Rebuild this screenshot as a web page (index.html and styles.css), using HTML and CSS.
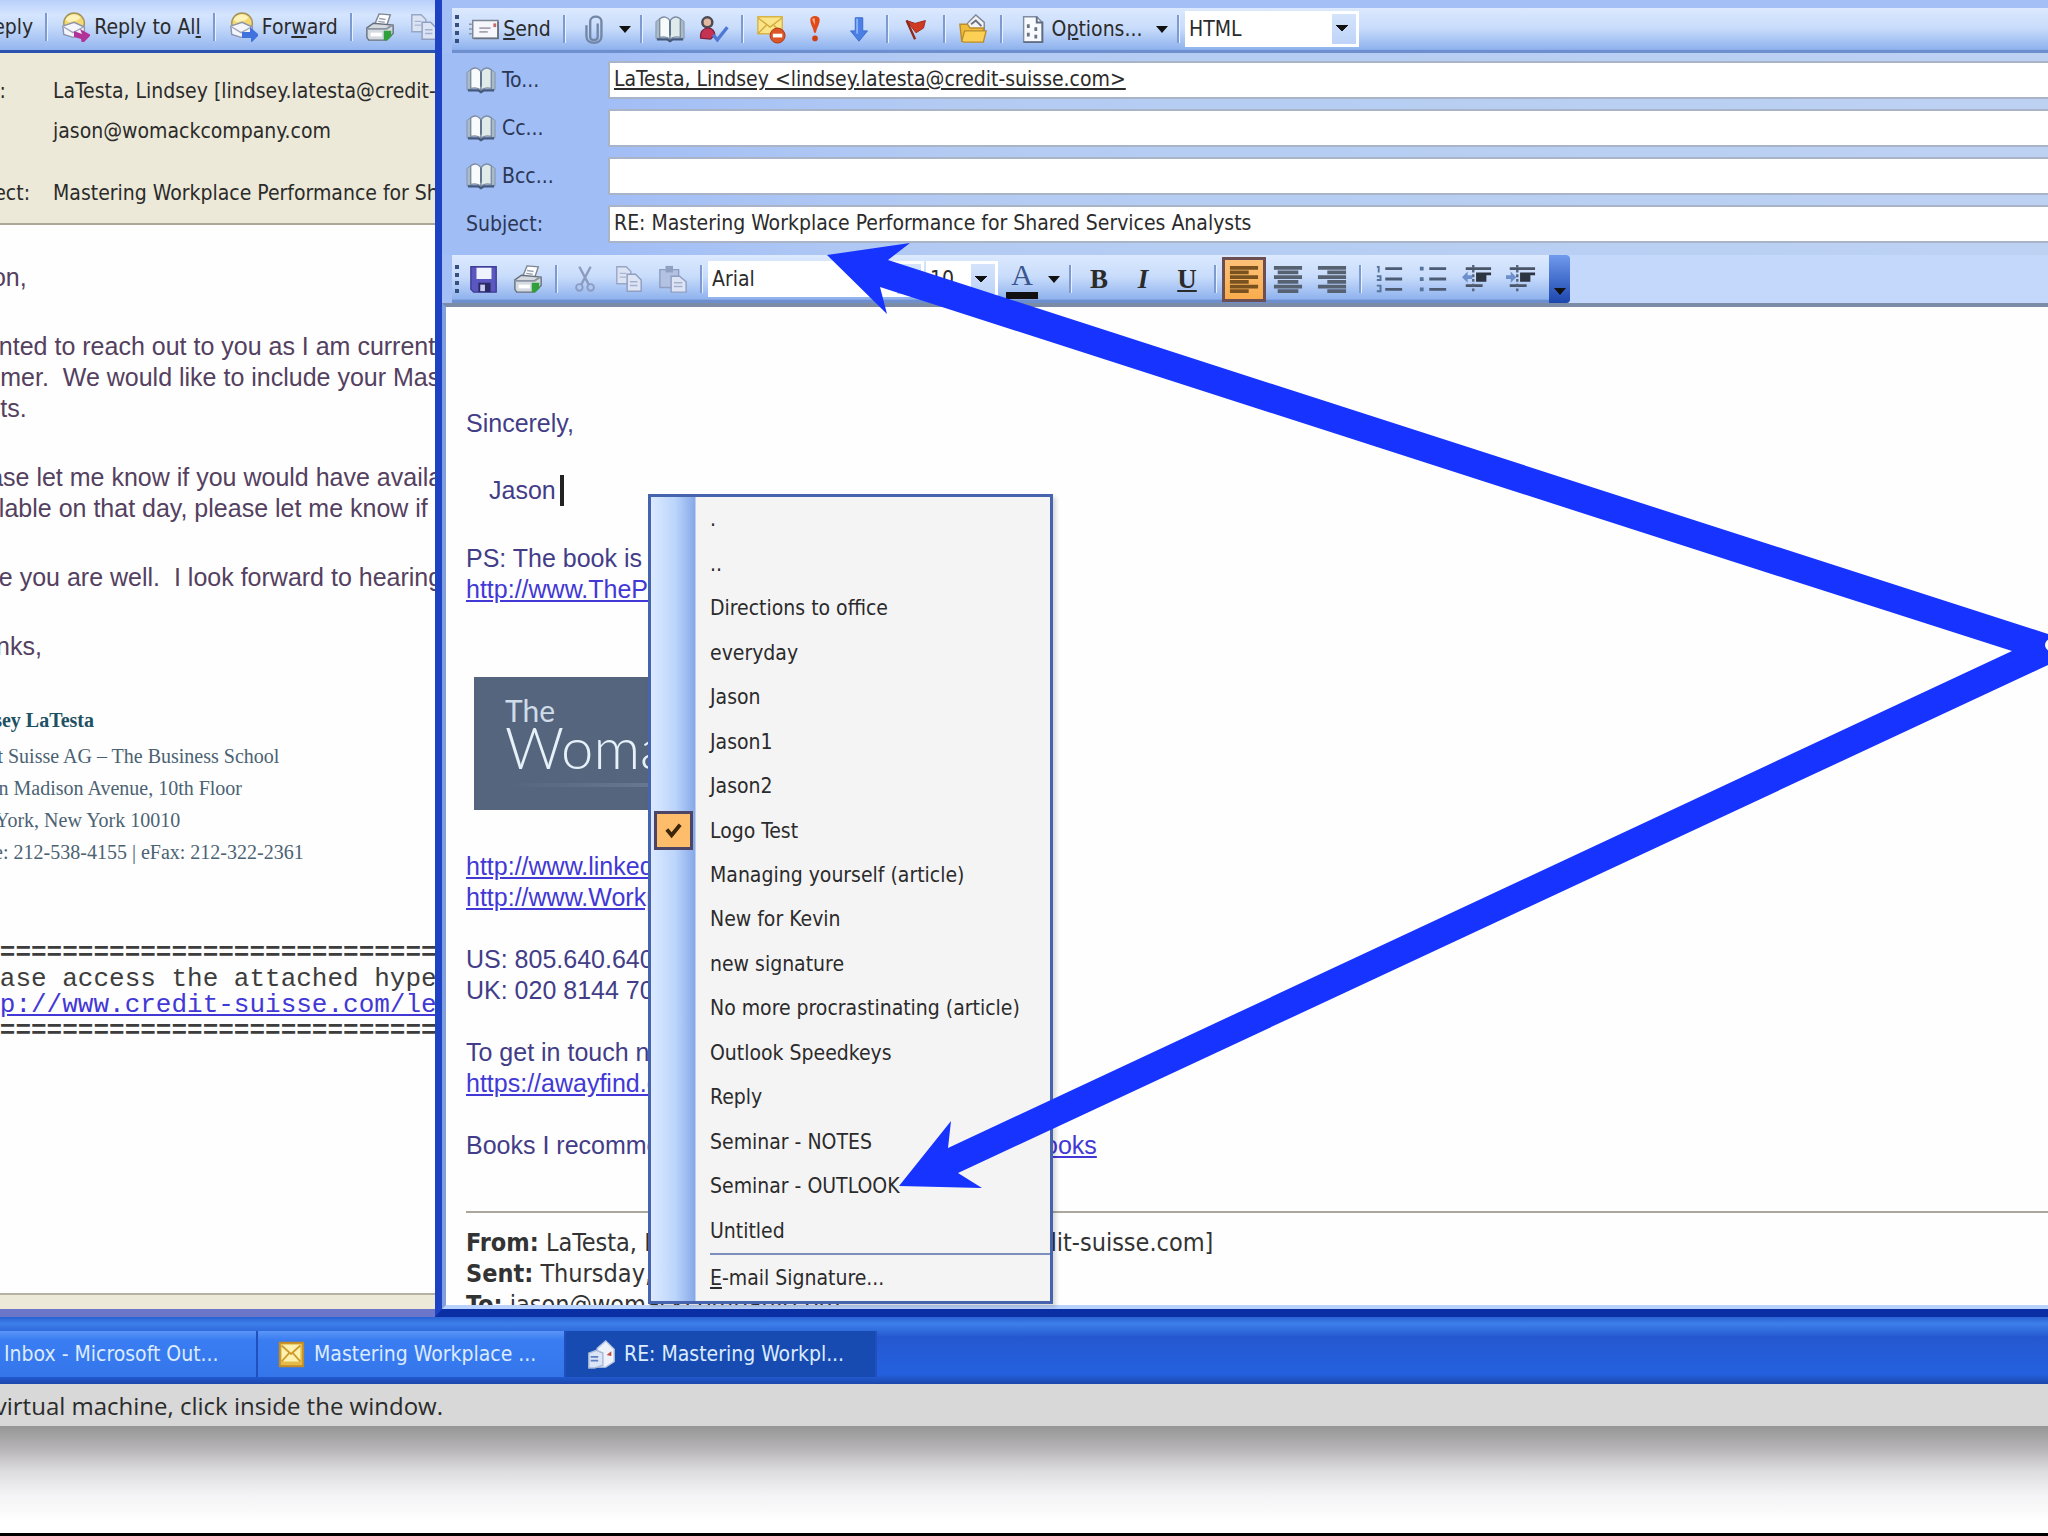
FILE: index.html
```html
<!DOCTYPE html>
<html lang="en">
<head>
    <meta charset="UTF-8">
    <meta name="viewport" content="width=device-width, initial-scale=1.0">
    <title>RE: Mastering Workplace Performance for Shared Services Analysts</title>
    <link rel="stylesheet" href="styles.css">
</head>
<body>
    <!-- shared icons -->
    <svg class="sprite" aria-hidden="true">
        <symbol id="i-head" viewBox="0 0 32 32">
            <circle cx="15" cy="12" r="11" fill="#f3d873" stroke="#a3925a" stroke-width="1.5"/>
            <path d="M6 8c3-6 12-7 16-2l-4 3-9 2z" fill="#fff3b8"/>
            <path d="M3 15l12-4 11 5v8l-12 3-10-3z" fill="#f4f6fb" stroke="#8c94ae" stroke-width="1.5"/>
            <path d="M4 16l10 6 11-6" fill="none" stroke="#9ca4bc" stroke-width="1.5"/>
        </symbol>
        <symbol id="i-printer" viewBox="0 0 32 32">
            <path d="M10 14l5-12 12 1-4 12z" fill="#fff" stroke="#7d8794" stroke-width="1.5"/>
            <path d="M15 7l7 1M14 10l7 1" stroke="#9aa4b5" stroke-width="1.5"/>
            <path d="M2 17l7-5 21 2v9l-7 7H4l-2-3z" fill="#d5dae0" stroke="#66707d" stroke-width="1.5"/>
            <path d="M3 18h20l6-4" fill="none" stroke="#8b95a2" stroke-width="2"/>
            <path d="M6 22h12v4H6z" fill="#fff"/>
            <path d="M20 20h8v6l-4 4h-4z" fill="#2fa03a"/>
        </symbol>
        <symbol id="i-copy" viewBox="0 0 32 32">
            <path d="M3 3h10l5 5v13H3z" fill="#dce4f4" stroke="#98a6c6" stroke-width="1.5"/>
            <path d="M6 10h7M6 14h7" stroke="#a9b5d1" stroke-width="1.5"/>
            <path d="M14 11h9l6 6v12H14z" fill="#dde5f5" stroke="#8f9dc0" stroke-width="1.5"/>
            <path d="M17 19h8M17 23h8" stroke="#a4b0cd" stroke-width="1.5"/>
        </symbol>
        <symbol id="i-paste" viewBox="0 0 32 32">
            <path d="M2 6h20v19H2z" fill="#b3c2e2" stroke="#8f9dc0" stroke-width="1.5"/>
            <path d="M8 2h8v7H8z" fill="#92a0c3"/>
            <path d="M14 13h9l7 6v11H14z" fill="#dde5f5" stroke="#8f9dc0" stroke-width="1.5"/>
            <path d="M17 20h9M17 24h9" stroke="#a4b0cd" stroke-width="1.5"/>
        </symbol>
        <symbol id="i-cut" viewBox="0 0 32 32">
            <path d="M10 3l10 19M22 3L12 22" stroke="#8b9bbf" stroke-width="2.5" fill="none"/>
            <circle cx="10" cy="25" r="3.5" stroke="#8b9bbf" stroke-width="2" fill="none"/>
            <circle cx="22" cy="25" r="3.5" stroke="#8b9bbf" stroke-width="2" fill="none"/>
        </symbol>
        <symbol id="i-save" viewBox="0 0 32 32">
            <path d="M2 3h27v27H5l-3-3z" fill="#5a57c0" stroke="#403d96" stroke-width="1.5"/>
            <path d="M8 4h16v12H8z" fill="#eef3ff"/>
            <path d="M10 20h13v10H10z" fill="#2b2a66"/>
            <path d="M12 22h5v7h-5z" fill="#c9cdf0"/>
        </symbol>
        <symbol id="i-book" viewBox="0 0 32 32">
            <path d="M1 8l4-3v21H1zM31 8l-4-3v21h4z" fill="#a9bac9" stroke="#8195ab"/>
            <path d="M5 5c4-3 8-2 11 2v20c-3-3-7-3-11-2z" fill="#f7fbfb" stroke="#7e8da2" stroke-width="1.5"/>
            <path d="M27 5c-4-3-8-2-11 2v20c3-3 7-3 11-2z" fill="#dfeaea" stroke="#7e8da2" stroke-width="1.5"/>
            <path d="M16 7v16" stroke="#62758f" stroke-width="2"/>
            <path d="M2 27h11l3 2 3-2h11" stroke="#46587a" stroke-width="2.5" fill="none"/>
        </symbol>
        <symbol id="i-envelope" viewBox="0 0 32 32">
            <path d="M4 7h27v19H4z" fill="#f5f7fc" stroke="#7d8492" stroke-width="1.5"/>
            <path d="M31 8v18H5" fill="none" stroke="#6b7280" stroke-width="2"/>
            <path d="M11 15h12M11 19h9" stroke="#a9a2b3" stroke-width="2"/>
            <path d="M26 10h3v4h-3z" fill="#c56a6a"/>
            <path d="M0 11h3M0 16h3M0 21h3" stroke="#8893a8" stroke-width="1.5"/>
        </symbol>
        <symbol id="i-clip" viewBox="0 0 32 32">
            <path d="M21 10v14c0 5-8 5-8 0V8c0-7 12-7 12 0v16c0 9-16 9-16 0V12" fill="none" stroke="#7187a5" stroke-width="2.5"/>
        </symbol>
        <symbol id="i-check-name" viewBox="0 0 36 32">
            <circle cx="10" cy="8" r="6" fill="#e2b9a0" stroke="#4d4a55" stroke-width="3"/>
            <path d="M2 27c-1-8 3-12 9-12 5 0 8 4 8 8l-5 5z" fill="#c63352" stroke="#7d2340" stroke-width="1.5"/>
            <path d="M17 23l5 6L34 14" fill="none" stroke="#4f78d6" stroke-width="4"/>
        </symbol>
        <symbol id="i-block" viewBox="0 0 32 32">
            <path d="M2 3h26v18H2z" fill="#fbe58a" stroke="#d8b445" stroke-width="1.5"/>
            <path d="M2 4l13 10L28 4M2 21l9-9M28 21l-9-9" fill="none" stroke="#d3ab3b" stroke-width="1.5"/>
            <circle cx="23" cy="23" r="8" fill="#dc5527" stroke="#aa3310"/>
            <path d="M18 21h10v4H18z" fill="#fff"/>
        </symbol>
        <symbol id="i-high" viewBox="0 0 32 32">
            <path d="M11 6c0-5 10-5 10 0 0 5-3 8-4 14h-2c-1-6-4-9-4-14z" fill="#e04a18"/>
            <path d="M13 6c0-2 3-2 3 0v6z" fill="#ffa37a"/>
            <circle cx="16" cy="26" r="3" fill="#cf3f13"/>
        </symbol>
        <symbol id="i-low" viewBox="0 0 32 32">
            <path d="M12 4h8v14h5L16 29 7 18h5z" fill="#4a80e6" stroke="#3a6acc"/>
            <path d="M14 5v16" stroke="#8fb3f7" stroke-width="2"/>
        </symbol>
        <symbol id="i-flag" viewBox="0 0 32 32">
            <path d="M6 7l9 3 11-3-2 8-8 5z" fill="#cf3a22" stroke="#9d2716"/>
            <path d="M6 7l9 20" stroke="#8d2a1c" stroke-width="2.5"/>
        </symbol>
        <symbol id="i-folder" viewBox="0 0 32 32">
            <path d="M10 10l9-9 9 8v12H10z" fill="#f1f3f7" stroke="#838792" stroke-width="1.5"/>
            <path d="M14 11l5-4 6 6" fill="none" stroke="#6b7180" stroke-width="2"/>
            <path d="M2 11h8l3 4h14v14H4z" fill="#f0bd3a" stroke="#b98c2d" stroke-width="1.5"/>
            <path d="M4 29l3-11h23l-3 12H6z" fill="#fbd055" stroke="#b98c2d" stroke-width="1.5"/>
        </symbol>
        <symbol id="i-page" viewBox="0 0 32 32">
            <path d="M6 3h14l6 6v21H6z" fill="#f8fafd" stroke="#7f8da2" stroke-width="1.5"/>
            <path d="M20 3v6h6v21H6" fill="none" stroke="#5f6d82" stroke-width="2"/>
            <path d="M11 11v4M11 20v4M19 14v4M19 22v4" stroke="#6a7485" stroke-width="3"/>
        </symbol>
        <symbol id="i-numbers" viewBox="0 0 32 32">
            <path d="M3 3h2v6M3 13h4v4H3M3 23h4v6H3" fill="none" stroke="#55739b" stroke-width="2"/>
            <path d="M12 5h18M12 16h18M12 27h18" stroke="#4d5c75" stroke-width="3"/>
        </symbol>
        <symbol id="i-bullets" viewBox="0 0 32 32">
            <path d="M2 3h4v4H2zM2 14h4v4H2zM2 25h4v4H2z" fill="#55739b"/>
            <path d="M12 5h18M12 16h18M12 27h18" stroke="#4d5c75" stroke-width="3"/>
        </symbol>
        <symbol id="i-outdent" viewBox="0 0 32 32">
            <path d="M4 5h27M4 23h18" stroke="#4b5568" stroke-width="3"/>
            <path d="M15 9h16v3H15zM15 12h11v7H15z" fill="#2d3442"/>
            <path d="M12 1v30" stroke="#55627a" stroke-width="2.5" stroke-dasharray="3 2"/>
            <path d="M6 8l-6 6 6 6v-4h5v-4H6z" fill="#6d8fcb"/>
        </symbol>
        <symbol id="i-indent" viewBox="0 0 32 32">
            <path d="M4 5h27M4 23h18" stroke="#4b5568" stroke-width="3"/>
            <path d="M15 9h16v3H15zM15 12h11v7H15z" fill="#2d3442"/>
            <path d="M12 1v30" stroke="#55627a" stroke-width="2.5" stroke-dasharray="3 2"/>
            <path d="M5 8l6 6-6 6v-4H0v-4h5z" fill="#6d8fcb"/>
        </symbol>
        <symbol id="i-mail" viewBox="0 0 32 32">
            <path d="M4 4h25v25H4z" fill="#e4bb49" stroke="#c28b25" stroke-width="2"/>
            <path d="M6 6h20v18H6z" fill="#fff2b0"/>
            <path d="M6 7l10 9 10-9M6 24l8-9M26 24l-8-9" fill="none" stroke="#cf9b2d" stroke-width="2"/>
        </symbol>
        <symbol id="i-write" viewBox="0 0 32 32">
            <path d="M12 10l9-8 9 9v13l-9 6H12z" fill="#eef3fb" stroke="#b9c6de" stroke-width="1.5"/>
            <path d="M3 15l8-3 7 3v13l-9 3H3z" fill="#dbe5f7" stroke="#a9b8d6" stroke-width="1.5"/>
            <path d="M5 19h8M5 23h8" stroke="#5d7fc0" stroke-width="2"/>
            <path d="M22 17l5-4v5z" fill="#c0493b"/>
        </symbol>
        <symbol id="i-caret" viewBox="0 0 12 8">
            <path d="M0 1h12L6 8z" fill="#111"/>
        </symbol>
    </svg>

    <div class="screen">
        <div class="desktop">

            <!-- message being read, mostly off the left edge -->
            <section class="reader">
                <div class="toolbar reader-toolbar">
                    <button class="tool reader-reply">Reply</button>
                    <span class="sep"></span>
                    <button class="tool"><svg class="icon"><use href="#i-head"/><path class="arrow-all" d="M14 19l8 3-2-5 11 6-9 9-1-5-7-2z"/></svg><span>Reply to Al<u>l</u></span></button>
                    <span class="sep"></span>
                    <button class="tool"><svg class="icon"><use href="#i-head"/><path class="arrow-fwd" d="M14 20h8v-5l9 8-8 8v-5h-9z"/></svg><span>For<u>w</u>ard</span></button>
                    <span class="sep"></span>
                    <button class="tool tool-icon" aria-label="Print"><svg class="icon"><use href="#i-printer"/></svg></button>
                    <button class="tool tool-icon" aria-label="Copy"><svg class="icon"><use href="#i-copy"/></svg></button>
                </div>
                <dl class="reader-head">
                    <dt>From:</dt>
                    <dd>LaTesta, Lindsey [lindsey.latesta@credit-suisse.com]</dd>
                    <dt>To:</dt>
                    <dd class="head-gap">jason@womackcompany.com</dd>
                    <dt>Subject:</dt>
                    <dd>Mastering Workplace Performance for Shared Services Analysts</dd>
                </dl>
                <div class="reader-body">
                    <p>Jason,</p>
                    <p>I wanted to reach out to you as I am currently<br>summer.&nbsp; We would like to include your Mastering<br>artists.</p>
                    <p>Please let me know if you would have availability<br>available on that day, please let me know if</p>
                    <p>Hope you are well.&nbsp; I look forward to hearing</p>
                    <p>Thanks,</p>
                    <div class="sender">
                        <strong>Lindsey LaTesta</strong>
                        <span>Credit Suisse AG &ndash; The Business School</span>
                        <span>Eleven Madison Avenue, 10th Floor</span>
                        <span>New York, New York 10010</span>
                        <span>Phone: 212-538-4155 | eFax: 212-322-2361</span>
                    </div>
                    <div class="disclaimer">
                        <b>==================================</b>
                        <span>Please access the attached hyperlink</span>
                        <a href="#">http://www.credit-suisse.com/legal</a>
                        <b>==================================</b>
                    </div>
                </div>
                <div class="reader-status"></div>
            </section>

            <!-- reply window -->
            <section class="compose">
                <div class="toolbar send-bar">
                    <span class="grip"></span>
                    <button class="tool tool-send"><svg class="icon"><use href="#i-envelope"/></svg><span><u>S</u>end</span></button>
                    <span class="sep"></span>
                    <button class="tool tool-icon" aria-label="Attach"><svg class="icon"><use href="#i-clip"/></svg></button>
                    <button class="tool tool-caret" aria-label="Attach options"><svg class="caret"><use href="#i-caret"/></svg></button>
                    <span class="sep"></span>
                    <button class="tool tool-icon" aria-label="Address book"><svg class="icon"><use href="#i-book"/></svg></button>
                    <button class="tool tool-icon" aria-label="Check names"><svg class="icon"><use href="#i-check-name"/></svg></button>
                    <span class="sep"></span>
                    <button class="tool tool-icon" aria-label="Permission"><svg class="icon"><use href="#i-block"/></svg></button>
                    <button class="tool tool-icon" aria-label="High importance"><svg class="icon"><use href="#i-high"/></svg></button>
                    <button class="tool tool-icon" aria-label="Low importance"><svg class="icon"><use href="#i-low"/></svg></button>
                    <span class="sep"></span>
                    <button class="tool tool-icon" aria-label="Flag"><svg class="icon"><use href="#i-flag"/></svg></button>
                    <span class="sep"></span>
                    <button class="tool tool-icon" aria-label="Rules"><svg class="icon"><use href="#i-folder"/></svg></button>
                    <span class="sep"></span>
                    <button class="tool tool-options"><svg class="icon"><use href="#i-page"/></svg><span>O<u>p</u>tions...</span></button>
                    <button class="tool tool-caret" aria-label="More options"><svg class="caret"><use href="#i-caret"/></svg></button>
                    <span class="sep"></span>
                    <select class="combo combo-format" aria-label="Message format"><option>HTML</option></select>
                </div>

                <div class="fields">
                    <button class="field-label" id="to-label"><svg class="icon"><use href="#i-book"/></svg>To...</button>
                    <input class="field field-to" type="text" aria-labelledby="to-label" value="LaTesta, Lindsey &lt;lindsey.latesta@credit-suisse.com&gt;">
                    <button class="field-label" id="cc-label"><svg class="icon"><use href="#i-book"/></svg>Cc...</button>
                    <input class="field" type="text" aria-labelledby="cc-label">
                    <button class="field-label" id="bcc-label"><svg class="icon"><use href="#i-book"/></svg>Bcc...</button>
                    <input class="field" type="text" aria-labelledby="bcc-label">
                    <label class="field-label" for="subject">Subject:</label>
                    <input class="field" type="text" id="subject" value="RE: Mastering Workplace Performance for Shared Services Analysts">
                </div>

                <div class="format-row">
                    <div class="toolbar format-bar">
                        <span class="grip"></span>
                        <button class="tool tool-icon" aria-label="Save"><svg class="icon"><use href="#i-save"/></svg></button>
                        <button class="tool tool-icon" aria-label="Print"><svg class="icon"><use href="#i-printer"/></svg></button>
                        <span class="sep"></span>
                        <button class="tool tool-icon" aria-label="Cut"><svg class="icon"><use href="#i-cut"/></svg></button>
                        <button class="tool tool-icon" aria-label="Copy"><svg class="icon"><use href="#i-copy"/></svg></button>
                        <button class="tool tool-icon" aria-label="Paste"><svg class="icon"><use href="#i-paste"/></svg></button>
                        <span class="sep"></span>
                        <select class="combo combo-font" aria-label="Font"><option>Arial</option></select>
                        <select class="combo combo-size" aria-label="Font size"><option>10</option></select>
                        <button class="tool tool-icon tool-color" aria-label="Font color">A</button>
                        <button class="tool tool-caret" aria-label="Pick color"><svg class="caret"><use href="#i-caret"/></svg></button>
                        <span class="sep"></span>
                        <button class="tool tool-icon letter"><b>B</b></button>
                        <button class="tool tool-icon letter"><i>I</i></button>
                        <button class="tool tool-icon letter"><u>U</u></button>
                        <span class="sep"></span>
                        <button class="tool tool-icon active" aria-label="Align left"><svg class="icon" viewBox="0 0 32 32"><path class="lines lines-on" d="M1 4h30M1 9h20M1 14h30M1 19h20M1 24h30M1 29h20"/></svg></button>
                        <button class="tool tool-icon" aria-label="Center"><svg class="icon" viewBox="0 0 32 32"><path class="lines" d="M1 4h30M5 9h22M1 14h30M5 19h22M1 24h30M5 29h22"/></svg></button>
                        <button class="tool tool-icon" aria-label="Align right"><svg class="icon" viewBox="0 0 32 32"><path class="lines" d="M1 4h30M11 9h20M1 14h30M11 19h20M1 24h30M11 29h20"/></svg></button>
                        <span class="sep"></span>
                        <button class="tool tool-icon" aria-label="Numbering"><svg class="icon"><use href="#i-numbers"/></svg></button>
                        <button class="tool tool-icon" aria-label="Bullets"><svg class="icon"><use href="#i-bullets"/></svg></button>
                        <button class="tool tool-icon" aria-label="Decrease indent"><svg class="icon"><use href="#i-outdent"/></svg></button>
                        <button class="tool tool-icon" aria-label="Increase indent"><svg class="icon"><use href="#i-indent"/></svg></button>
                        <button class="bar-end" aria-label="Toolbar options"><svg class="caret"><use href="#i-caret"/></svg></button>
                    </div>
                </div>

                <div class="message">
                    <p>Sincerely,</p>
                    <p class="signed">Jason<span class="cursor"></span></p>
                    <p>PS: The book is here<br><a href="#">http://www.ThePromise</a></p>
                    <div class="logo">
                        <span class="logo-the">The</span>
                        <span class="logo-name">Womack</span>
                        <span class="logo-line"></span>
                    </div>
                    <p><a href="#">http://www.linkedin.com</a><br><a href="#">http://www.Workplace</a></p>
                    <p>US: 805.640.6401<br>UK: 020 8144 7012</p>
                    <p>To get in touch now<br><a href="#">https://awayfind.com</a></p>
                    <p>Books I recommend <a href="#">http://www.jasonwomack.com/books</a></p>
                    <hr>
                    <div class="quoted">
                        <div><b>From:</b> LaTesta, Lindsey [mailto:lindsey.latesta@credit-suisse.com]</div>
                        <div><b>Sent:</b> Thursday, March 18</div>
                        <div><b>To:</b> jason@womackcompany.com</div>
                    </div>
                </div>
            </section>

            <!-- signature menu -->
            <ul class="menu">
                <li>.</li>
                <li>..</li>
                <li>Directions to office</li>
                <li>everyday</li>
                <li>Jason</li>
                <li>Jason1</li>
                <li>Jason2</li>
                <li class="checked"><svg class="tick" viewBox="0 0 20 20"><path d="M3 9l5 6 9-11"/></svg>Logo Test</li>
                <li>Managing yourself (article)</li>
                <li>New for Kevin</li>
                <li>new signature</li>
                <li>No more procrastinating (article)</li>
                <li>Outlook Speedkeys</li>
                <li>Reply</li>
                <li>Seminar - NOTES</li>
                <li>Seminar - OUTLOOK</li>
                <li>Untitled</li>
                <li class="menu-last"><span><u>E</u>-mail Signature...</span></li>
            </ul>
        </div>

        <div class="taskbar">
            <button class="task task-first">Inbox - Microsoft Out...</button>
            <button class="task"><svg class="icon"><use href="#i-mail"/></svg>Mastering Workplace ...</button>
            <button class="task task-on"><svg class="icon"><use href="#i-write"/></svg>RE: Mastering Workpl...</button>
        </div>
        <div class="vm-status"><span>To direct input to this virtual machine, click inside the window.</span></div>
        <div class="shadow"></div>
    </div>

    <!-- annotation arrows -->
    <svg class="arrows" width="2048" height="1536" viewBox="0 0 2048 1536" aria-hidden="true">
        <path d="M827 255L910 243 888 260 1700 522 2048 634V665L958 1173 982 1188 899 1186 951 1121 948 1148 2012 651 1700 551 880 287 887 314z"/>
        <circle cx="2051" cy="645" r="6"/>
    </svg>
</body>
</html>
```
FILE: styles.css
```css
* {
    margin: 0;
    padding: 0;
    box-sizing: border-box;
}

body {
    position: relative;
    overflow: hidden;
    font-family: "DejaVu Sans Condensed", "DejaVu Sans", sans-serif;
    font-size: 21px;
    color: #2b2b2b;
    background: #fff;
}

button, input, select {
    font: inherit;
    color: inherit;
    border: none;
    background: none;
}

.sprite {
    display: none;
}

.screen {
    display: flex;
    flex-direction: column;
    height: 100vh;
}

.desktop {
    position: relative;
    display: flex;
    flex: 1;
    min-height: 0;
}

/* toolbars */

.toolbar {
    display: flex;
    align-items: center;
    height: 45px;
    background: linear-gradient(#dce9fe, #c8dcfb 45%, #8fb2ee 92%, #6d8fce 94%);
}

.tool {
    display: flex;
    align-items: center;
    justify-content: center;
    gap: 4px;
    height: 42px;
    white-space: nowrap;
}

.tool-icon {
    width: 44px;
}

.tool-caret {
    width: 20px;
}

.tool-send {
    width: 96px;
}

.tool-options {
    width: 144px;
}

.icon {
    width: 30px;
    height: 30px;
    flex: none;
}

.caret {
    width: 12px;
    height: 8px;
}

.sep {
    flex: none;
    width: 13px;
    height: 28px;
    background: linear-gradient(90deg, transparent 5px, #7d9bd0 5px, #7d9bd0 7px, #e8f1ff 7px, #e8f1ff 8px, transparent 8px);
}

.grip {
    width: 4px;
    height: 28px;
    margin: 0 3px;
    background: repeating-linear-gradient(#35507f 0, #35507f 4px, transparent 4px, transparent 8px);
}

.combo {
    appearance: none;
    height: 36px;
    padding: 0 4px;
    background:
        linear-gradient(to top left, transparent 50%, #111 50%) right 11px center / 6px 7px no-repeat,
        linear-gradient(to top right, transparent 50%, #111 50%) right 17px center / 6px 7px no-repeat,
        linear-gradient(#d5e4fc, #bdd3f7) right 3px center / 24px 30px no-repeat,
        #fff;
}

.combo-format {
    width: 174px;
}

.combo-font {
    width: 216px;
}

.combo-size {
    width: 72px;
    margin: 0 2px;
}

/* reading pane */

.reader {
    display: flex;
    flex-direction: column;
    flex: 0 0 435px;
    overflow: hidden;
    white-space: nowrap;
    background: #fefefe;
}

.reader-toolbar {
    height: 53px;
    padding-top: 3px;
    border-bottom: 3px solid #2c52b0;
    background: linear-gradient(#b9d0fa, #d5e5fe 30%, #c8dcfb 50%, #94b5ef);
}

.reader-toolbar .tool {
    padding: 0 7px;
}

.reader-toolbar .reader-reply {
    margin-left: -26px;
}

.arrow-all {
    fill: #b2329a;
}

.arrow-fwd {
    fill: #3f72dd;
}

.reader-head {
    display: grid;
    grid-template-columns: 100px 1fr;
    align-content: start;
    height: 172px;
    padding-top: 18px;
    margin-left: -47px;
    line-height: 40px;
    background: #ece9d8;
    border-bottom: 2px solid #aca899;
}

.head-gap {
    margin-bottom: 22px;
}

.reader-body {
    flex: 1;
    min-height: 0;
    padding-top: 37px;
    margin-left: -47px;
    overflow: hidden;
    font: 25px/31px "Liberation Sans", Arial, sans-serif;
    color: #54405f;
}

.reader-body p {
    margin-bottom: 38px;
}

.sender {
    display: flex;
    flex-direction: column;
    margin-top: 42px;
    font: 20px/32px "Liberation Serif", "Times New Roman", serif;
    color: #4b6273;
}

.sender strong {
    margin-bottom: 4px;
    color: #1e5163;
}

.disclaimer {
    display: flex;
    flex-direction: column;
    margin-top: 72px;
    font: 26px/26px "Liberation Mono", "Courier New", monospace;
    color: #3d3d3d;
}

.reader-status {
    height: 24px;
    border-top: 2px solid #b5b2a4;
    border-bottom: 8px solid #6b76c8;
    background: #ece9d8;
}

a {
    color: #4238d6;
}

/* compose window */

.compose {
    display: flex;
    flex-direction: column;
    flex: 1;
    min-width: 0;
    padding-top: 8px;
    border-left: 7px solid #1d42c4;
    border-bottom: 8px solid #0a2fa5;
    background: #a3bff6;
}

.send-bar {
    padding-bottom: 4px;
}

.send-bar,
.format-row {
    margin-left: 10px;
}

.fields {
    display: grid;
    grid-template-columns: 142px 1fr;
    row-gap: 10px;
    padding: 8px 0 12px 24px;
    background: linear-gradient(90deg, #a1bdf6 150px, #b3cbf3 500px, #bdd2f3);
}

.field-label {
    display: flex;
    align-items: center;
    gap: 6px;
    color: #2a3855;
}

.field {
    height: 38px;
    min-width: 0;
    padding: 0 4px 2px;
    border: 2px solid #a9b4c6;
    border-right: none;
    background: #fff;
}

.field-to {
    text-decoration: underline;
}

.format-row {
    background: #c3d8fa;
}

.format-bar {
    width: fit-content;
    height: 48px;
    border-radius: 0 4px 4px 0;
}

.tool-color {
    font: 30px/24px "Liberation Serif", serif;
    color: #3b5691;
    border: solid transparent;
    border-width: 0 6px;
    background: linear-gradient(#111, #111) center bottom 1px / 32px 7px no-repeat;
    padding-bottom: 8px;
}

.letter {
    font: bold 27px/30px "Liberation Serif", serif;
}

.active {
    height: 45px;
    border: 3px solid #6b4f52;
    background: linear-gradient(#ffc279, #f9ac4c);
}

.lines {
    fill: none;
    stroke: #566172;
    stroke-width: 4;
}

.lines-on {
    stroke: #7a5220;
}

.bar-end {
    display: flex;
    align-items: flex-end;
    justify-content: center;
    align-self: stretch;
    width: 21px;
    margin-left: 6px;
    padding-bottom: 8px;
    border-radius: 0 4px 4px 0;
    background: linear-gradient(#6f9aec, #1c46ad);
}

.message {
    flex: 1;
    min-height: 0;
    padding: 101px 0 0 20px;
    overflow: hidden;
    white-space: nowrap;
    border-left: 4px solid #7f9fe0;
    border-top: 4px solid #7d8ca6;
    border-bottom: 4px solid #b9d2fb;
    background: #fefefe;
    font: 25px/31px "Liberation Sans", Arial, sans-serif;
    color: #433d88;
}

.message p {
    margin-bottom: 31px;
}

.message .signed {
    margin: 36px 0 37px 23px;
}

.cursor {
    display: inline-block;
    width: 4px;
    height: 31px;
    margin-left: 4px;
    vertical-align: -7px;
    background: #222;
}

.logo {
    display: flex;
    flex-direction: column;
    width: 400px;
    height: 133px;
    margin: 72px 0 41px 8px;
    padding: 18px 0 0 31px;
    font-family: Lato, sans-serif;
    background: #54657d;
}

.logo-the {
    font-size: 30px;
    line-height: 30px;
    color: #cfdcea;
}

.logo-name {
    font-size: 58px;
    font-weight: 300;
    line-height: 44px;
    color: #e6f1fa;
}

.logo-line {
    height: 4px;
    margin-top: 14px;
    background: linear-gradient(90deg, #54657d, #8494ac);
}

.message hr {
    margin-top: 50px;
    border: none;
    border-top: 2px solid #aaa79f;
}

.quoted {
    padding-top: 14px;
    font-family: "DejaVu Sans Condensed", "DejaVu Sans", sans-serif;
    font-size: 25px;
    color: #333;
}

/* signature menu, floats over the message */

.menu {
    position: absolute;
    top: 494px;
    left: 648px;
    display: flex;
    flex-direction: column;
    width: 405px;
    height: 810px;
    list-style: none;
    border: 3px solid #4664ad;
    background: linear-gradient(90deg, #dbe9ff, #bcd5fb 24px, #86a9e8 44px, #f5f4f5 45px);
    box-shadow: 3px 3px 4px rgba(0, 0, 0, 0.15);
}

.menu li {
    display: flex;
    flex: 1;
    align-items: center;
    padding-left: 59px;
    white-space: nowrap;
}

.menu .checked {
    padding-left: 3px;
    gap: 17px;
}

.tick {
    width: 39px;
    height: 39px;
    padding: 7px;
    border: 3px solid #4c4566;
    background: #fdbd6b;
}

.tick path {
    fill: none;
    stroke: #3c2508;
    stroke-width: 4;
}

.menu .menu-last {
    flex: 0 0 48px;
    margin-left: 59px;
    padding-left: 0;
    border-top: 2px solid #7d8fbd;
}

/* bottom of the screen */

.taskbar {
    display: flex;
    align-items: center;
    height: 67px;
    padding-top: 10px;
    padding-bottom: 4px;
    background: linear-gradient(#2a62d3, #3d80ea 10%, #2558d0 30%, #2461df 85%, #1c47ab);
}

.task {
    display: flex;
    align-items: center;
    gap: 8px;
    width: 308px;
    height: 46px;
    padding-left: 18px;
    color: #dcebff;
    white-space: nowrap;
    border-right: 2px solid #1f50bd;
    background: linear-gradient(#5a94f6, #3a7df2 20%, #3475ea);
}

.task-first {
    width: 258px;
    padding-left: 4px;
}

.task-on {
    width: 311px;
    padding-left: 20px;
    background: #174bb2;
}

.vm-status {
    display: flex;
    align-items: center;
    height: 42px;
    background: #d8d8d8;
}

.vm-status span {
    display: flex;
    justify-content: flex-end;
    width: 443px;
    font-family: "Open Sans", sans-serif;
    font-size: 24px;
    white-space: nowrap;
}

.shadow {
    height: 110px;
    border-bottom: 3px solid #000;
    background: linear-gradient(#969696, #b4b2b4 20%, #dcdbdd 42%, #f4f3f5 65%, #fff 90%);
}

.arrows {
    position: absolute;
    top: 0;
    left: 0;
    fill: #1733ff;
}

.arrows circle {
    fill: #fff;
}
```
